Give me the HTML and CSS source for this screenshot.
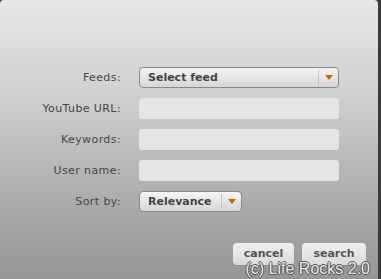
FILE: index.html
```html
<!DOCTYPE html>
<html>
<head>
<meta charset="utf-8">
<link rel="stylesheet" href="styles.css">
</head>
<body>
<div class="panel">
  <form class="form">
    <label class="lbl">Feeds:</label>
    <div class="select wide"><span class="sel-text">Select feed</span><span class="sel-arrow"></span></div>
    <label class="lbl">YouTube URL:</label>
    <div class="input"></div>
    <label class="lbl">Keywords:</label>
    <div class="input"></div>
    <label class="lbl">User name:</label>
    <div class="input"></div>
    <label class="lbl">Sort by:</label>
    <div class="select narrow"><span class="sel-text">Relevance</span><span class="sel-arrow"></span></div>
  </form>
  <div class="buttons">
    <div class="btn cancel">cancel</div>
    <div class="btn search">search</div>
  </div>
  <div class="watermark">(c) Life Rocks 2.0</div>
</div>
</body>
</html>
```
FILE: styles.css
```css
html, body {
  margin: 0;
  padding: 0;
  background: #3a3a3a;
}
.panel {
  position: relative;
  width: 378px;
  height: 279px;
  box-sizing: border-box;
  border-radius: 4px 4px 0 0;
  background: linear-gradient(to bottom, #e7e7e7 0%, #cfcfcf 35%, #a9a9a9 75%, #969696 100%);
  padding-top: 67px;
  font-family: "DejaVu Sans", Verdana, sans-serif;
  font-size: 11px;
  overflow: hidden;
}
.form {
  display: grid;
  grid-template-columns: 121px auto;
  grid-auto-rows: 21px;
  row-gap: 10px;
  column-gap: 18px;
  margin: 0;
}
.lbl {
  text-align: right;
  color: #454545;
  line-height: 21px;
  letter-spacing: 0.4px;
}
.input {
  width: 200px;
  height: 21px;
  background: #e5e5e5;
  border-radius: 3px;
}
.select {
  display: flex;
  align-items: center;
  height: 21px;
  box-sizing: border-box;
  border: 1px solid #8a8a8a;
  border-radius: 4px;
  background: linear-gradient(to bottom, #f6f6f6 0%, #e2e2e2 60%, #d6d6d6 100%);
}
.wide { width: 200px; }
.narrow { width: 103px; }
.sel-text {
  flex: 1;
  padding-left: 8px;
  font-weight: bold;
  color: #444;
}
.sel-arrow {
  position: relative;
  width: 19px;
  height: 15px;
  border-left: 1px solid #c2c2c2;
}
.sel-arrow::after {
  content: "";
  position: absolute;
  left: 6px;
  top: 5px;
  border-left: 4px solid transparent;
  border-right: 4px solid transparent;
  border-top: 5px solid #c26a08;
}
.buttons {
  display: flex;
  justify-content: flex-end;
  gap: 8px;
  padding: 31px 12px 0 0;
}
.btn {
  height: 22px;
  line-height: 22px;
  text-align: center;
  border-radius: 4px;
  background: linear-gradient(to bottom, #f0f0f0 0%, #dadada 100%);
  font-weight: bold;
  color: #555;
  box-shadow: 0 1px 0 #8a8a8a;
}
.cancel { width: 61px; }
.search { width: 64px; }
.watermark {
  position: absolute;
  right: 8px;
  bottom: 1px;
  font-family: "Liberation Sans", Arial, sans-serif;
  font-size: 16px;
  color: #e8e8e8;
  text-shadow: -1px 0 #555, 1px 0 #555, 0 1px #555, 0 -1px #555;
}
```
